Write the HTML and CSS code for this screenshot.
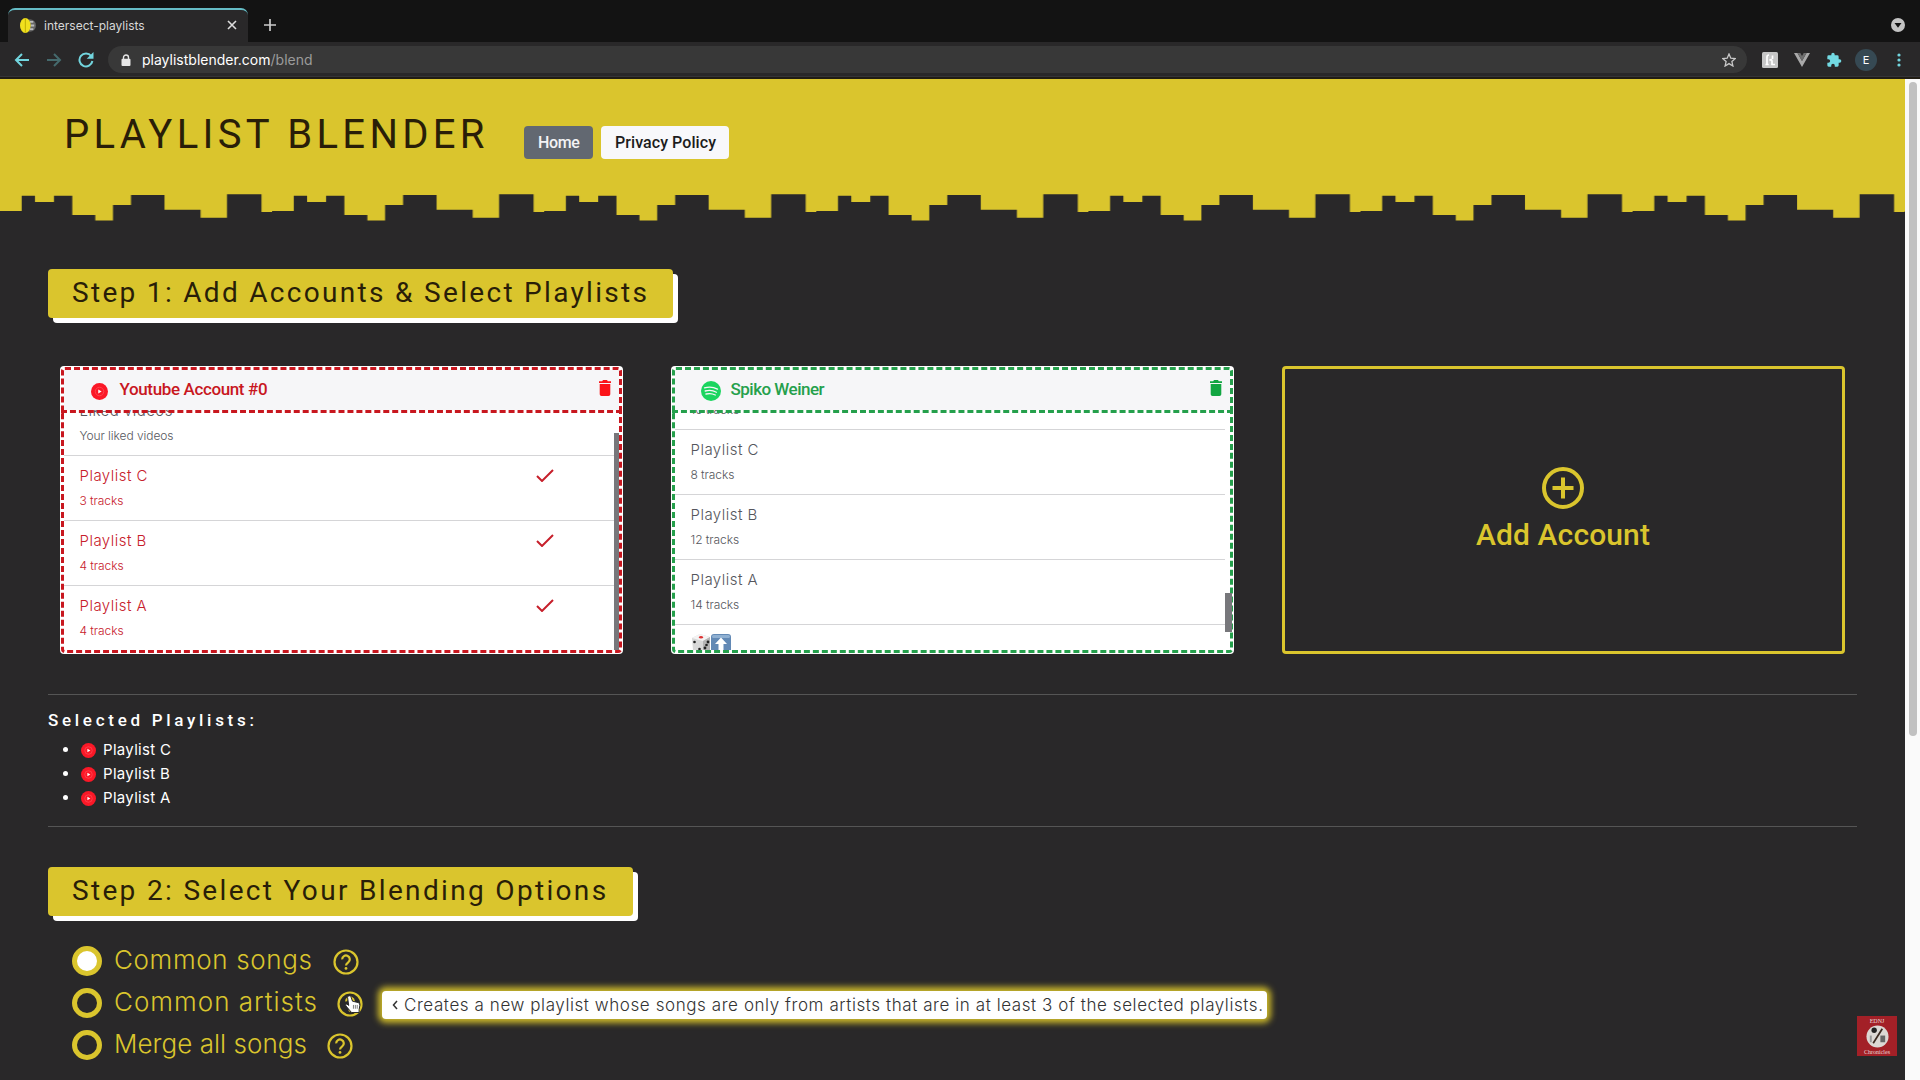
FILE: index.html
```html
<!DOCTYPE html>
<html lang="en">
<head>
<meta charset="utf-8">
<title>intersect-playlists</title>
<link rel="stylesheet" href="styles.css">
</head>
<body>
<svg width="0" height="0" class="defs">
  <defs>
    <symbol id="yt" viewBox="0 0 20 20"><circle cx="10" cy="10" r="10" fill="#fb1827"/><circle cx="10" cy="10" r="5" fill="none" stroke="#fd4a54" stroke-width="1"/><path d="M8.500 7.700l4 2.300-4 2.300z" fill="#fff"/></symbol>
    <symbol id="trash" viewBox="0 0 12 16"><path d="M0 1.200h3.200L4 0h4l.8 1.200H12V3H0zM.7 4h10.600v10.200q0 1.800-1.800 1.800h-7Q.7 16 .7 14.200z" fill="currentColor"/></symbol>
    <symbol id="check" viewBox="0 0 18 13"><path d="M1 7l5 5L17 1" fill="none" stroke="currentColor" stroke-width="2"/></symbol>
    <symbol id="help" viewBox="0 0 26 26"><circle cx="13" cy="13" r="11.500" fill="none" stroke="currentColor" stroke-width="2.200"/><path d="M9.200 10.400a3.800 3.800 0 1 1 6 3c-1.400 1-2.200 1.600-2.200 3.200" fill="none" stroke="currentColor" stroke-width="2.200"/><circle cx="13" cy="19.400" r="1.400" fill="currentColor"/></symbol>
  </defs>
</svg>
<header class="chrome">
  <div class="tabs">
    <div class="tab">
      <svg class="favicon" viewBox="0 0 18 18"><circle cx="11" cy="9" r="7" fill="#666"/><path d="M11 5h4M12 9h4M11 13h4" stroke="#bbb" stroke-width="2"/><ellipse cx="6" cy="9" rx="6" ry="8.500" fill="#f0e01e"/><path d="M6 1v16" stroke="#b9a900" stroke-width="1"/></svg>
      <span class="tabname">intersect-playlists</span>
      <svg class="close" viewBox="0 0 10 10"><path d="M1 1l8 8M9 1L1 9" stroke="#ddd" stroke-width="1.600"/></svg>
    </div>
    <svg class="plus" viewBox="0 0 12 12"><path d="M6 0v12M0 6h12" stroke="#ccc" stroke-width="1.700"/></svg>
    <svg class="tabmenu" viewBox="0 0 14 14"><circle cx="7" cy="7" r="7" fill="#c4c4c4"/><path d="M3.500 5h7L7 9.800z" fill="#131313"/></svg>
  </div>
  <div class="toolbar">
    <svg class="nav" viewBox="0 0 16 14"><path d="M15 7H2M8 1L2 7l6 6" fill="none" stroke="#72d5de" stroke-width="2"/></svg>
    <svg class="nav" viewBox="0 0 16 14"><path d="M1 7h13M8 1l6 6-6 6" fill="none" stroke="#456a6d" stroke-width="2"/></svg>
    <svg class="nav reload" viewBox="0 0 16 16"><path d="M13.200 4A6.500 6.500 0 1 0 14.400 9" fill="none" stroke="#72d5de" stroke-width="2"/><path d="M15.500 0v6.800H8.700z" fill="#72d5de"/></svg>
    <div class="omnibox">
      <svg class="lock" viewBox="0 0 10 12"><path d="M2.500 5V3.500a2.500 2.500 0 0 1 5 0V5" fill="none" stroke="#e6e6e6" stroke-width="1.400"/><rect x=".5" y="4.700" width="9" height="7.300" rx="1" fill="#e6e6e6"/></svg>
      <span class="url">playlistblender.com<span class="path">/blend</span></span>
      <svg class="star" viewBox="0 0 14 14"><path d="M7 1l1.800 4.200 4.500.4-3.400 3 1 4.400L7 10.600 3.100 13l1-4.400-3.400-3 4.500-.4z" fill="none" stroke="#c9c9c9" stroke-width="1.300"/></svg>
    </div>
    <svg class="ext" viewBox="0 0 16 16"><rect width="16" height="16" rx="1.500" fill="#c6c6c6"/><path d="M5 13V5q0-2 2-2M3.500 12.500h3.200M7.500 8.500q2.500-2 2.500 1V13M9.500 12.500H13M10.500 3.500V7" fill="none" stroke="#fff" stroke-width="1.700"/></svg>
    <svg class="ext" viewBox="0 0 16 14"><path d="M0 0h3.500L8 8l4.500-8H16L8 14z" fill="#a9a9a9"/><path d="M3.500 0H6.300L8 3l1.700-3h2.800L8 8z" fill="#6e6e6e"/></svg>
    <svg class="ext" viewBox="0 0 24 24"><path d="M20.500 11H19V7a2 2 0 0 0-2-2h-4V3.500a2.500 2.500 0 0 0-5 0V5H4a2 2 0 0 0-2 2v3.800h1.500a2.700 2.700 0 0 1 0 5.400H2V20a2 2 0 0 0 2 2h3.800v-1.500a2.700 2.700 0 0 1 5.400 0V22H17a2 2 0 0 0 2-2v-4h1.500a2.500 2.500 0 0 0 0-5z" fill="#72d9e2"/></svg>
    <span class="avatar">E</span>
    <svg class="dots" viewBox="0 0 4 14"><g fill="#72d5de"><circle cx="2" cy="2" r="1.600"/><circle cx="2" cy="7" r="1.600"/><circle cx="2" cy="12" r="1.600"/></g></svg>
  </div>
</header>
<div class="view">
  <main class="page">
    <div class="hero">
      <div class="brandbar">
        <h1 class="brand">PLAYLIST BLENDER</h1>
        <a class="btn home">Home</a>
        <a class="btn privacy">Privacy Policy</a>
      </div>
      <svg class="skyline" width="1905" height="28">
        <defs><pattern id="sky" width="272.100" height="28" patternUnits="userSpaceOnUse"><path d="M0 28V18H21.700V2.700H35V9H54V2.700H72.300V22H95.300V27.500H113V12H131V2H164.500V16.700H200.600V24.700H227V1.300H261.500V19H272.100V28z" fill="#292829"/></pattern></defs>
        <rect width="1905" height="28" fill="url(#sky)"/>
      </svg>
    </div>
    <div class="content">
      <h2 class="step">Step 1: Add Accounts &amp; Select Playlists</h2>
      <div class="cards">
        <section class="card yt">
          <div class="cardhead"><svg class="logo"><use href="#yt"/></svg><span class="name">Youtube Account #0</span><svg class="trash"><use href="#trash"/></svg></div>
          <div class="list">
            <div class="row plain"><div><p class="t">Liked videos</p><p class="s">Your liked videos</p></div></div>
            <div class="row"><div><p class="t">Playlist C</p><p class="s">3 tracks</p></div><svg class="check"><use href="#check"/></svg></div>
            <div class="row"><div><p class="t">Playlist B</p><p class="s">4 tracks</p></div><svg class="check"><use href="#check"/></svg></div>
            <div class="row"><div><p class="t">Playlist A</p><p class="s">4 tracks</p></div><svg class="check"><use href="#check"/></svg></div>
          </div>
          <i class="thumb"></i>
        </section>
        <section class="card sp">
          <div class="cardhead"><svg class="logo" viewBox="0 0 20 20"><circle cx="10" cy="10" r="10" fill="#1bd55f"/><path d="M3.500 6.800q7-2 13 1.300M4.200 10q6-1.700 11.200 1.200M5 13q5-1.300 9.300 1" fill="none" stroke="#f6f6f8" stroke-width="1.300" stroke-linecap="round"/></svg><span class="name">Spiko Weiner</span><svg class="trash"><use href="#trash"/></svg></div>
          <div class="list">
            <div class="row"><div><p class="t">Playlist D</p><p class="s">10 tracks</p></div></div>
            <div class="row"><div><p class="t">Playlist C</p><p class="s">8 tracks</p></div></div>
            <div class="row"><div><p class="t">Playlist B</p><p class="s">12 tracks</p></div></div>
            <div class="row"><div><p class="t">Playlist A</p><p class="s">14 tracks</p></div></div>
            <div class="row"><div class="emoji">
              <svg viewBox="0 0 20 20"><path d="M1 4l8-4 10 3v13l-7 4-10-4z" fill="#d9d9d9"/><path d="M1 4l11 3 7-4-10-3z" fill="#f4f4f4"/><path d="M12 7l7-4v13l-7 4z" fill="#b5b5b5"/><ellipse cx="10" cy="3.300" rx="2" ry="1.200" fill="#d33"/><g fill="#222"><circle cx="3.500" cy="8" r="1.300"/><circle cx="8.500" cy="15" r="1.300"/><circle cx="14" cy="14" r="1.400"/><circle cx="17" cy="8" r="1.400"/><circle cx="15.500" cy="11" r="1.300"/></g></svg>
              <svg viewBox="0 0 20 20"><rect width="20" height="20" rx="3" fill="#6289b5"/><rect x="1" y="1" width="18" height="3" rx="1.500" fill="#8fb0d2"/><path d="M10 3.500l6 6.500h-3.500v7h-5v-7H4z" fill="#fff"/></svg>
            </div></div>
          </div>
          <i class="thumb"></i>
        </section>
        <section class="add">
          <svg viewBox="0 0 42 42"><circle cx="21" cy="21" r="19" fill="none" stroke="currentColor" stroke-width="4"/><path d="M21 10.500v21M10.500 21h21" stroke="currentColor" stroke-width="4"/></svg>
          <span>Add Account</span>
        </section>
      </div>
      <section class="selected">
        <h3>Selected Playlists:</h3>
        <ul>
          <li><svg><use href="#yt"/></svg><span>Playlist C</span></li>
          <li><svg><use href="#yt"/></svg><span>Playlist B</span></li>
          <li><svg><use href="#yt"/></svg><span>Playlist A</span></li>
        </ul>
      </section>
      <h2 class="step two">Step 2: Select Your Blending Options</h2>
      <div class="options">
        <label class="opt songs"><i class="radio on"></i><span>Common songs</span><svg class="help"><use href="#help"/></svg></label>
        <label class="opt artists"><i class="radio"></i><span>Common artists</span><svg class="help"><use href="#help"/></svg>
          <svg class="hand" viewBox="0 0 18 20"><path d="M5 1.500q1.500-1 2.300.8L9 7l6 1.500q2 .7 1.800 3L16 16v3H8L2 12q-1-2 1-2l2 1.500L3.800 3Q3.700 2 5 1.500z" fill="#fff" stroke="#222" stroke-width="1"/><path d="M10 11v4M12 11v4M14 11v4" stroke="#555" stroke-width=".8"/></svg>
          <span class="tip"><svg viewBox="0 0 6 10"><path d="M5 1L1.500 5 5 9" fill="none" stroke="#333" stroke-width="1.500"/></svg><span>Creates a new playlist whose songs are only from artists that are in at least 3 of the selected playlists.</span></span></label>
        <label class="opt merge"><i class="radio"></i><span>Merge all songs</span><svg class="help"><use href="#help"/></svg></label>
      </div>
    </div>
    <div class="mark"><span>EDNJ</span><svg viewBox="0 0 24 24"><circle cx="12" cy="12" r="11.500" fill="#dcd8d4"/><circle cx="8.500" cy="5.500" r="2.800" fill="#222"/><path d="M17 4L7.500 19" stroke="#3b2a20" stroke-width="1.800"/><rect x="15" y="11" width="5" height="7" fill="#666"/><path d="M5 11v7" stroke="#999" stroke-width="2"/></svg><span>Chronicles</span></div>
  </main>
  <div class="scroll"><i></i></div>
</div>
</body>
</html>
```
FILE: styles.css
```css
* { box-sizing: border-box; }
body { margin: 0; height: 1080px; overflow: hidden; background: #292829; color: #fff; font-family: Inter, "Open Sans", sans-serif; font-weight: 300; }
h1, h2, h3, p, ul { margin: 0; padding: 0; }
svg { display: block; flex: none; }
.defs { position: absolute; }

/* browser frame */
.chrome { height: 79px; background: #292829; border-bottom: 2px solid #211d14; font-family: Inter, sans-serif; font-weight: 400; }
.tabs { height: 42px; padding: 8px 15px 0 8px; background: #131313; display: flex; align-items: center; }
.tab { width: 240px; height: 34px; padding: 0 11px 2px 12px; display: flex; align-items: center; background: #292829; border-top: 2px solid #65bcc5; border-radius: 7px 7px 0 0; }
.favicon { width: 16px; height: 17px; }
.tabname { margin-left: 8px; font-size: 12px; color: #d8d8d8; flex: 1; white-space: nowrap; }
.close { width: 10px; height: 10px; }
.plus { width: 12px; height: 12px; margin-left: 16px; }
.tabmenu { width: 14px; height: 14px; margin-left: auto; }
.toolbar { height: 35px; display: flex; align-items: center; padding: 1px 19px 0 14px; border-bottom: 1px solid #353438; }
.nav { width: 16px; height: 14px; margin-right: 16px; }
.nav.reload { width: 16px; height: 16px; margin-right: 14px; }
.omnibox { flex: 1; height: 27px; border-radius: 14px; background: #383838; display: flex; align-items: center; padding: 0 11px 0 13px; }
.lock { width: 10px; height: 12px; }
.url { margin-left: 11px; font-size: 14px; flex: 1; }
.path { color: #9b9b9b; }
.star { width: 14px; height: 14px; }
.ext { width: 16px; height: 16px; margin-left: 16px; }
.omnibox + .ext { margin-left: 15px; }
.avatar { width: 22px; height: 22px; margin: 0 20px 0 13px; border-radius: 50%; background: #364953; text-align: center; line-height: 22px; font-size: 11px; }
.dots { width: 4px; height: 14px; }

/* page */
.view { display: flex; height: 1001px; }
.page { width: 1905px; position: relative; }
.scroll { width: 15px; padding: 3px 3px 0 4px; background: #fafafa; }
.scroll i { display: block; height: 654px; border-radius: 4px; background: #c1c1c1; }
.hero { height: 142px; background: #dac52d; display: flex; flex-direction: column; justify-content: space-between; }
.brandbar { display: flex; padding: 31px 0 0 64px; font-family: Roboto, sans-serif; }
.brand { width: 460px; padding-top: 2px; font-size: 40px; line-height: 46px; font-weight: 400; letter-spacing: 4.300px; color: #291e08; white-space: nowrap; }
.btn { height: 33px; margin-top: 16px; padding: 0 14px; border-radius: 4px; font-size: 16px; line-height: 33px; font-weight: 500; white-space: nowrap; }
.home { width: 69px; background: #626871; color: #f3f3f5; letter-spacing: -.35px; }
.privacy { width: 128px; margin-left: 8px; background: #f8f8fb; color: #1c1c20; letter-spacing: .07px; }
.content { padding: 48px 48px 0; }
.step { width: 625px; height: 49px; padding-left: 24px; border-radius: 4px; background: #dac52d; box-shadow: 5px 5px 0 #fff; color: #291e08; font: 400 28px/48px Roboto, sans-serif; letter-spacing: 2.310px; white-space: nowrap; }
.cards { display: flex; gap: 48px; margin: 48px 12px 0 11.500px; }
.card, .add { width: 563px; height: 288px; border-radius: 4px; flex: none; }
.card { position: relative; background: #fff; padding: 1px; color: #c7202b; }
.yt { --line: #c8171f; --icon: #fb1419; --off: -19px; }
.sp { --line: #25a04c; --icon: #12a642; --off: -45px; }
.cardhead { position: relative; z-index: 1; height: 46px; padding: 0 8px 0 26px; border: 3px dashed var(--line); border-radius: 4px 4px 0 0; background: linear-gradient(#f6f6f8, #f6f6f8) padding-box; display: flex; align-items: center; }
.logo { width: 20px; height: 20px; margin-top: 2px; }
.yt .logo { width: 17px; height: 17px; margin-left: 1px; margin-right: 1px; }
.name { margin: -2px 0 0 11px; flex: 1; font: 500 17px/20px Roboto, sans-serif; letter-spacing: -.37px; color: var(--line); }
.sp .name { margin-left: 10px; letter-spacing: -.51px; }
.trash { width: 12px; height: 16px; color: var(--icon); margin-bottom: 4px; }
.list { height: 243px; margin-top: -3px; border: 3px dashed var(--line); border-top: 0; border-radius: 0 0 4px 4px; overflow: hidden; }
.list .row:first-child { margin-top: var(--off); }
.row { height: 65px; padding: 8px 65px 0 16px; border-bottom: 1px solid #d5d5d7; display: flex; justify-content: space-between; }
.sp .row { margin-right: 5px; }
.sp .row, .row.plain { color: #55565c; }
.row p { white-space: nowrap; }
.t { font-size: 15px; line-height: 24px; letter-spacing: .480px; }
.s { margin-top: 2px; font-size: 12px; line-height: 22px; letter-spacing: -.07px; }
.check { width: 18px; height: 13px; margin-top: 5px; }
.emoji { display: flex; margin-top: 1px; }
.emoji svg { width: 20px; height: 20px; }
.thumb { position: absolute; right: 4px; top: 67px; width: 5px; height: 217px; background: #77777b; }
.sp .thumb { right: 2px; top: 227px; width: 7px; height: 39px; }
.add { border: 3px solid #dac52d; color: #dac52d; display: flex; flex-direction: column; align-items: center; padding-top: 98px; font: 500 30px/36px Roboto, sans-serif; letter-spacing: .12px; }
.add svg { width: 42px; height: 42px; margin-bottom: 8px; }
.selected { margin-top: 40px; height: 133px; border: solid #555; border-width: 1px 0; padding-top: 15px; }
.selected h3 { font: 500 17px/20px Roboto, sans-serif; letter-spacing: 3.710px; white-space: nowrap; }
.selected ul { list-style: none; margin-top: 7px; }
.selected li { height: 24px; display: flex; align-items: center; padding-left: 15px; font-size: 15px; font-weight: 400; letter-spacing: .310px; }
.selected li::before { content: ""; width: 5px; height: 5px; border-radius: 50%; background: #fff; }
.selected li svg { width: 15px; height: 15px; margin: 2px 7px 0 13px; }
.two { width: 585px; margin-top: 40px; letter-spacing: 2.330px; }
.options { padding: 24px 0 0 24px; }
.opt { position: relative; height: 42px; display: flex; align-items: center; font-size: 26px; color: #dac52d; white-space: nowrap; }
.opt > span:not(.tip) { margin-top: -3px; }
.songs { letter-spacing: .640px; }
.artists { letter-spacing: 1px; }
.merge { letter-spacing: .04px; }
.radio { width: 30px; height: 30px; border: 5px solid #dac52d; border-radius: 50%; margin-right: 12px; }
.radio.on { background: #fff; }
.help { width: 26px; height: 26px; margin: 1px 0 0 20px; }
.artists .help { margin-left: 19px; }
.hand { position: absolute; left: 272px; top: 12px; width: 17px; height: 20px; }
.tip { position: absolute; left: 310px; top: 9px; width: 885px; height: 28px; padding-left: 10px; display: flex; align-items: center; border-radius: 4px; background: #fff; box-shadow: 0 0 6px 4px #cdb92a; color: #333; font-size: 17px; letter-spacing: .578px; }
.tip svg { width: 6px; height: 10px; margin-right: 6px; }
.mark { position: absolute; right: 8px; bottom: 24px; width: 40px; height: 40px; background: #a32027; display: flex; flex-direction: column; align-items: center; justify-content: center; font: 6px/8px "Liberation Serif", serif; color: #e8d8d8; }
.mark svg { width: 23px; height: 23px; }
```
